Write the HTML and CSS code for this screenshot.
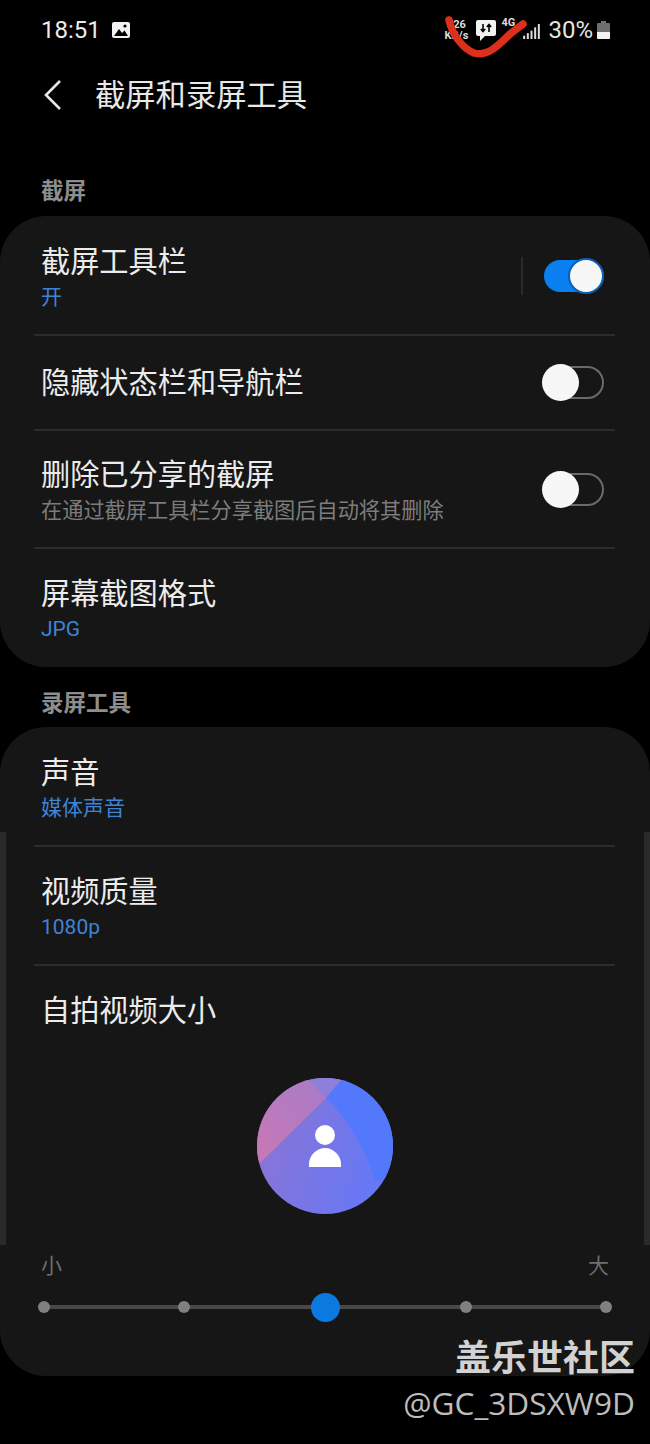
FILE: index.html
```html
<!DOCTYPE html>
<html lang="zh-CN">
<head>
    <meta charset="UTF-8">
    <meta name="viewport" content="width=device-width, initial-scale=1.0">
    <title>截屏和录屏工具</title>
    <link rel="stylesheet" href="styles.css">
</head>
<body>
    <div class="status-bar">
        <span class="clock">18:51</span>
        <svg class="picture-icon" viewBox="0 0 20 18">
            <rect x="1" y="1" width="18" height="16" rx="2" fill="#f2f2f2"/>
            <path d="M3 15 L8 8 L11 12 L13.5 9.5 L17 15 Z" fill="#000"/>
            <circle cx="14" cy="5" r="1.6" fill="#000"/>
        </svg>
        <div class="status-right">
            <div class="speed"><span>026</span><span>KB/s</span></div>
            <svg class="msg-icon" viewBox="0 0 20 21">
                <path d="M2 0 H18 A2 2 0 0 1 20 2 V14 A2 2 0 0 1 18 16 H9 L4 21 V16 H2 A2 2 0 0 1 0 14 V2 A2 2 0 0 1 2 0 Z" fill="#f2f2f2"/>
                <path d="M7 4 V11 M4.8 9 L7 11.5 L9.2 9 M13 12 V5 M10.8 7 L13 4.5 L15.2 7" stroke="#000" stroke-width="1.6" fill="none"/>
            </svg>
            <span class="net">4G</span>
            <svg class="signal-icon" viewBox="0 0 20 18">
                <rect x="0" y="14" width="2.4" height="4" fill="#ddd"/>
                <rect x="4.4" y="11" width="2.4" height="7" fill="#ddd"/>
                <rect x="8.8" y="8" width="2.4" height="10" fill="#ddd"/>
                <rect x="13.2" y="4" width="2.4" height="14" fill="#ddd"/>
                <rect x="17.6" y="0" width="2.4" height="18" fill="#ddd"/>
            </svg>
            <span class="percent">30%</span>
            <svg class="battery-icon" viewBox="0 0 13 18">
                <rect x="4" y="0" width="5" height="2" fill="#777"/>
                <rect x="0" y="2" width="13" height="16" rx="1" fill="#6e6e6e"/>
                <path d="M0 11 H13 V17 A1 1 0 0 1 12 18 H1 A1 1 0 0 1 0 17 Z" fill="#f2f2f2"/>
            </svg>
        </div>
    </div>

    <div class="header">
        <svg class="back-icon" viewBox="0 0 20 32">
            <path d="M17 2 L3 16 L17 30" stroke="#e8e8e8" stroke-width="2.6" fill="none"/>
        </svg>
        <h1>截屏和录屏工具</h1>
    </div>

    <h2 class="section-title first">截屏</h2>
    <div class="card">
        <div class="row tall">
            <div class="row-text">
                <div class="row-title">截屏工具栏</div>
                <div class="row-sub">开</div>
            </div>
            <span class="row-divider"></span>
            <span class="toggle on"></span>
        </div>
        <div class="row short">
            <div class="row-title">隐藏状态栏和导航栏</div>
            <span class="toggle"></span>
        </div>
        <div class="row mid">
            <div class="row-text">
                <div class="row-title">删除已分享的截屏</div>
                <div class="row-desc">在通过截屏工具栏分享截图后自动将其删除</div>
            </div>
            <span class="toggle"></span>
        </div>
        <div class="row tall">
            <div class="row-text">
                <div class="row-title">屏幕截图格式</div>
                <div class="row-sub">JPG</div>
            </div>
        </div>
    </div>

    <h2 class="section-title">录屏工具</h2>
    <div class="card">
        <div class="row tall">
            <div class="row-text">
                <div class="row-title">声音</div>
                <div class="row-sub">媒体声音</div>
            </div>
        </div>
        <div class="row tall">
            <div class="row-text">
                <div class="row-title">视频质量</div>
                <div class="row-sub">1080p</div>
            </div>
        </div>
        <div class="selfie">
            <div class="row-title">自拍视频大小</div>
            <svg class="avatar" viewBox="0 0 136 136">
                <defs>
                    <clipPath id="avatarClip"><circle cx="68" cy="68" r="68"/></clipPath>
                    <linearGradient id="avatarBase" x1="0" y1="0" x2="1" y2="0.3">
                        <stop offset="0" stop-color="#8f74d0"/>
                        <stop offset="1" stop-color="#6678f6"/>
                    </linearGradient>
                    <linearGradient id="avatarPink" x1="0" y1="1" x2="1" y2="0">
                        <stop offset="0" stop-color="#c878b4"/>
                        <stop offset="1" stop-color="#a77cc8"/>
                    </linearGradient>
                </defs>
                <g clip-path="url(#avatarClip)">
                    <rect width="136" height="136" fill="url(#avatarBase)"/>
                    <path d="M3 85 L69 20 L51 0 L0 0 L0 85 Z" fill="url(#avatarPink)"/>
                    <path d="M51 0 L69 20 L86 0 Z" fill="#8f7fdc"/>
                    <path d="M69 20 L86 0 L136 0 L136 100 L119 103 Q100 50 69 20 Z" fill="#5478fb"/>
                    <circle cx="68" cy="57" r="10" fill="#fff"/>
                    <path d="M52 89 V86 C52 77 60 70 68 70 C76 70 84 77 84 86 V89 Z" fill="#fff"/>
                </g>
            </svg>
            <div class="scale-labels"><span>小</span><span>大</span></div>
            <div class="slider">
                <span class="dot"></span>
                <span class="dot"></span>
                <span class="dot active"></span>
                <span class="dot"></span>
                <span class="dot"></span>
            </div>
        </div>
    </div>

    <span class="scrollbar left"></span>
    <span class="scrollbar right"></span>

    <svg class="scribble" viewBox="0 0 650 80">
        <path d="M449 20 C452 34 462 48 474 53 C488 57 500 44 510 34 L523 24" stroke="#dc2f1c" stroke-width="7.5" stroke-linecap="round" fill="none"/>
    </svg>

    <div class="watermark">
        <div class="watermark-name">盖乐世社区</div>
        <div class="watermark-id">@GC_3DSXW9D</div>
    </div>
</body>
</html>
```

FILE: styles.css
```css
* {
    margin: 0;
    padding: 0;
    box-sizing: border-box;
}

body {
    background: #000;
    color: #f0f0f0;
    font-family: Roboto, "Noto Sans CJK SC", sans-serif;
    width: 650px;
    height: 1444px;
    position: relative;
    overflow: hidden;
}

.status-bar {
    display: flex;
    align-items: center;
    height: 60px;
    padding: 0 40px 0 41px;
}

.clock {
    font-size: 24px;
    color: #ececec;
}

.picture-icon {
    width: 20px;
    height: 18px;
    margin-left: 10px;
}

.status-right {
    display: flex;
    align-items: center;
    margin-left: auto;
}

.speed {
    display: flex;
    flex-direction: column;
    align-items: center;
    width: 24px;
    font-size: 11px;
    font-weight: 700;
    line-height: 11px;
    color: #ddd;
}

.msg-icon {
    width: 20px;
    height: 21px;
    margin-left: 8px;
}

.net {
    width: 22px;
    margin-left: 5px;
    font-size: 11px;
    font-weight: 700;
    color: #ddd;
    align-self: flex-start;
}

.signal-icon {
    width: 17px;
    height: 15px;
    margin-top: 2px;
}

.percent {
    margin-left: 8px;
    font-size: 24px;
    color: #e4e4e4;
}

.battery-icon {
    width: 13px;
    height: 18px;
    margin-left: 4px;
}

.header {
    display: flex;
    align-items: center;
    height: 70px;
    padding-left: 43px;
}

.back-icon {
    width: 20px;
    height: 32px;
}

.header h1 {
    margin: 0 0 4px 32px;
    font-size: 30.3px;
    font-weight: 400;
    color: #e8e8e8;
}

.section-title {
    height: 60px;
    padding: 21px 0 0 41px;
    font-size: 22.5px;
    line-height: 30px;
    font-weight: 700;
    color: #8e8e8e;
}

.section-title.first {
    height: 86px;
    padding-top: 46px;
}

.card {
    background: #161616;
    border-radius: 46px;
}

.row {
    display: flex;
    align-items: center;
    padding: 0 46px 0 41px;
    position: relative;
}

.row::after {
    content: "";
    position: absolute;
    left: 34px;
    right: 35px;
    bottom: -1px;
    height: 2px;
    background: #2c2c2c;
}

.card .row:last-child::after {
    display: none;
}

.row.tall {
    height: 119px;
}

.row.mid {
    height: 118px;
}

.row.short {
    height: 95px;
}

.row-text {
    padding-top: 5px;
}

.row-title {
    font-size: 29.2px;
    line-height: 36px;
    color: #ececec;
}

.row-sub {
    margin-top: 1px;
    font-size: 21px;
    line-height: 32px;
    color: #3f83d6;
}

.row-desc {
    margin-top: 2px;
    font-size: 21.2px;
    line-height: 32px;
    color: #7c7c7c;
}

.row-divider {
    width: 2px;
    height: 38px;
    margin-left: auto;
    background: #2a2a2a;
}

.toggle {
    position: relative;
    width: 60px;
    height: 33px;
    margin-left: auto;
    border: 2px solid #6a6a6a;
    border-radius: 17px;
}

.toggle::before {
    content: "";
    position: absolute;
    left: -4px;
    top: -4px;
    width: 37px;
    height: 37px;
    border-radius: 50%;
    background: #f7f7f7;
}

.toggle.on {
    margin-left: 21px;
    height: 32px;
    background: #0a80f0;
    border: none;
}

.toggle.on::before {
    box-sizing: border-box;
    left: 24px;
    top: -2px;
    width: 36px;
    height: 36px;
    border: 2px solid #0a5fb5;
}

.selfie {
    height: 411px;
    padding-top: 28px;
}

.selfie .row-title {
    padding-left: 41px;
}

.avatar {
    display: block;
    width: 136px;
    height: 136px;
    margin: 49px auto 0;
}

.scale-labels {
    display: flex;
    justify-content: space-between;
    margin-top: 37px;
    padding: 0 41px;
    font-size: 21px;
    line-height: 30px;
    color: #6e6e6e;
}

.slider {
    position: relative;
    display: flex;
    justify-content: space-between;
    align-items: center;
    height: 30px;
    margin: 11px 38px 0;
}

.slider::before {
    content: "";
    position: absolute;
    left: 6px;
    right: 6px;
    top: 13px;
    height: 4px;
    background: #484848;
}

.dot {
    position: relative;
    width: 12px;
    height: 12px;
    border-radius: 50%;
    background: #808080;
}

.dot.active {
    width: 29px;
    height: 29px;
    margin: 0 -8px;
    background: #0a7ae0;
}

.scrollbar {
    position: absolute;
    top: 832px;
    width: 6px;
    height: 413px;
    background: #2a2a2a;
}

.scrollbar.left {
    left: 0;
}

.scrollbar.right {
    right: 0;
}

.scribble {
    position: absolute;
    left: 0;
    top: 0;
    width: 650px;
    height: 80px;
}

.watermark {
    position: absolute;
    right: 15px;
    top: 1336px;
    text-align: right;
}

.watermark-name {
    font-size: 36px;
    line-height: 46px;
    font-weight: 700;
    color: #d2d2d2;
}

.watermark-id {
    font-family: "Open Sans", sans-serif;
    font-size: 31.6px;
    line-height: 42px;
    color: #bdbdbd;
}
```
